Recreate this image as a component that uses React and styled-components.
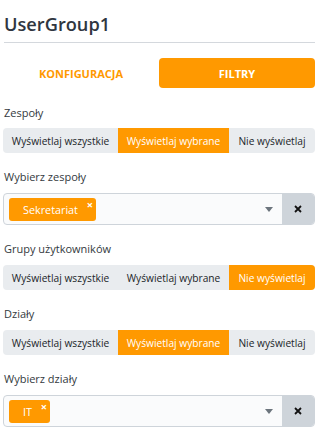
import { useState } from 'react';
import styled, { createGlobalStyle } from 'styled-components';

const GlobalStyle = createGlobalStyle`
  body {
    margin: 0;
    background: #ffffff;
    font-family: "Open Sans", "Noto Sans", sans-serif;
    color: #212529;
  }
`;

const ORANGE = '#ff9900';

const Page = styled.div`
  padding: 0 5px 0 3px;
`;

const Title = styled.h1`
  margin: 0 0 0 1px;
  padding: 10px 0 4px;
  font-size: 18.2px;
  line-height: 28px;
  font-weight: 600;
  color: #2f3640;
  border-bottom: 1px solid #d4d8dd;
`;

const Tabs = styled.div`
  display: grid;
  grid-template-columns: 1fr 1fr;
  margin-top: 15px;
`;

const Tab = styled.button`
  height: 30px;
  border: none;
  border-radius: 4px;
  background: ${(p) => (p.$active ? ORANGE : 'transparent')};
  color: ${(p) => (p.$active ? '#ffffff' : ORANGE)};
  font-family: inherit;
  font-size: 11px;
  font-weight: 700;
  text-transform: uppercase;
  cursor: pointer;
`;

const Field = styled.div`
  margin-top: ${(p) => (p.$first ? '15px' : '14px')};
`;

const Label = styled.div`
  padding-left: 1px;
  font-size: 11px;
  line-height: 20px;
  color: #343a40;
  margin-bottom: ${(p) => (p.$tight ? '5px' : '6px')};
`;

const Segmented = styled.div`
  display: grid;
  grid-template-columns: minmax(0, 115fr) minmax(0, 111fr) minmax(0, 86fr);
  height: 25px;
  border-radius: 4px;
  overflow: hidden;
  background: #e9ecef;
`;

const Segment = styled.button`
  border: none;
  padding: 0;
  background: ${(p) => (p.$active ? ORANGE : 'transparent')};
  color: ${(p) => (p.$active ? '#ffffff' : '#212529')};
  font-family: inherit;
  font-size: 10.2px;
  white-space: nowrap;
  cursor: pointer;
`;

const Select = styled.div`
  display: flex;
  height: 32px;
  border: 1px solid #ced4da;
  border-radius: 4px;
  overflow: hidden;
  background: #fafbfc;
  box-sizing: border-box;
`;

const Values = styled.div`
  flex: 1;
  display: flex;
  align-items: center;
  padding-left: 5px;
`;

const Tag = styled.span`
  position: relative;
  display: inline-flex;
  align-items: center;
  height: 23px;
  padding: 0 18px 0 14px;
  border-radius: 3px;
  background: ${ORANGE};
  color: #ffffff;
  font-size: 10.8px;
`;

const TagRemove = styled.span`
  position: absolute;
  top: 2px;
  right: 3px;
  font-size: 11px;
  font-weight: 700;
  line-height: 9px;
`;

const Caret = styled.span`
  display: flex;
  align-items: center;
  padding: 0 9px;
`;

const ClearButton = styled.button`
  width: 32px;
  border: none;
  background: #ced4da;
  display: flex;
  align-items: center;
  justify-content: center;
  padding: 0;
  cursor: pointer;
`;

const options = ['Wyświetlaj wszystkie', 'Wyświetlaj wybrane', 'Nie wyświetlaj'];

function SegmentControl({ value, onChange }) {
  return (
    <Segmented>
      {options.map((o, i) => (
        <Segment key={o} $active={value === i} onClick={() => onChange(i)}>
          {o}
        </Segment>
      ))}
    </Segmented>
  );
}

function MultiSelect({ tags }) {
  return (
    <Select>
      <Values>
        {tags.map((t) => (
          <Tag key={t}>
            {t}
            <TagRemove>×</TagRemove>
          </Tag>
        ))}
      </Values>
      <Caret>
        <svg width="8" height="5" viewBox="0 0 8 5">
          <path d="M0 0 L8 0 L4 5 Z" fill="#6c757d" />
        </svg>
      </Caret>
      <ClearButton>
        <svg width="8" height="8" viewBox="0 0 8 8">
          <path d="M1 1 L7 7 M7 1 L1 7" stroke="#111" strokeWidth="1.8" />
        </svg>
      </ClearButton>
    </Select>
  );
}

export default function App() {
  const [tab, setTab] = useState(1);
  const [teams, setTeams] = useState(1);
  const [groups, setGroups] = useState(2);
  const [depts, setDepts] = useState(1);

  return (
    <>
      <GlobalStyle />
      <Page>
        <Title>UserGroup1</Title>
        <Tabs>
          <Tab $active={tab === 0} onClick={() => setTab(0)}>Konfiguracja</Tab>
          <Tab $active={tab === 1} onClick={() => setTab(1)}>Filtry</Tab>
        </Tabs>
        <Field $first>
          <Label $tight>Zespoły</Label>
          <SegmentControl value={teams} onChange={setTeams} />
        </Field>
        <Field>
          <Label>Wybierz zespoły</Label>
          <MultiSelect tags={['Sekretariat']} />
        </Field>
        <Field>
          <Label>Grupy użytkowników</Label>
          <SegmentControl value={groups} onChange={setGroups} />
        </Field>
        <Field>
          <Label>Działy</Label>
          <SegmentControl value={depts} onChange={setDepts} />
        </Field>
        <Field>
          <Label>Wybierz działy</Label>
          <MultiSelect tags={['IT']} />
        </Field>
      </Page>
    </>
  );
}
